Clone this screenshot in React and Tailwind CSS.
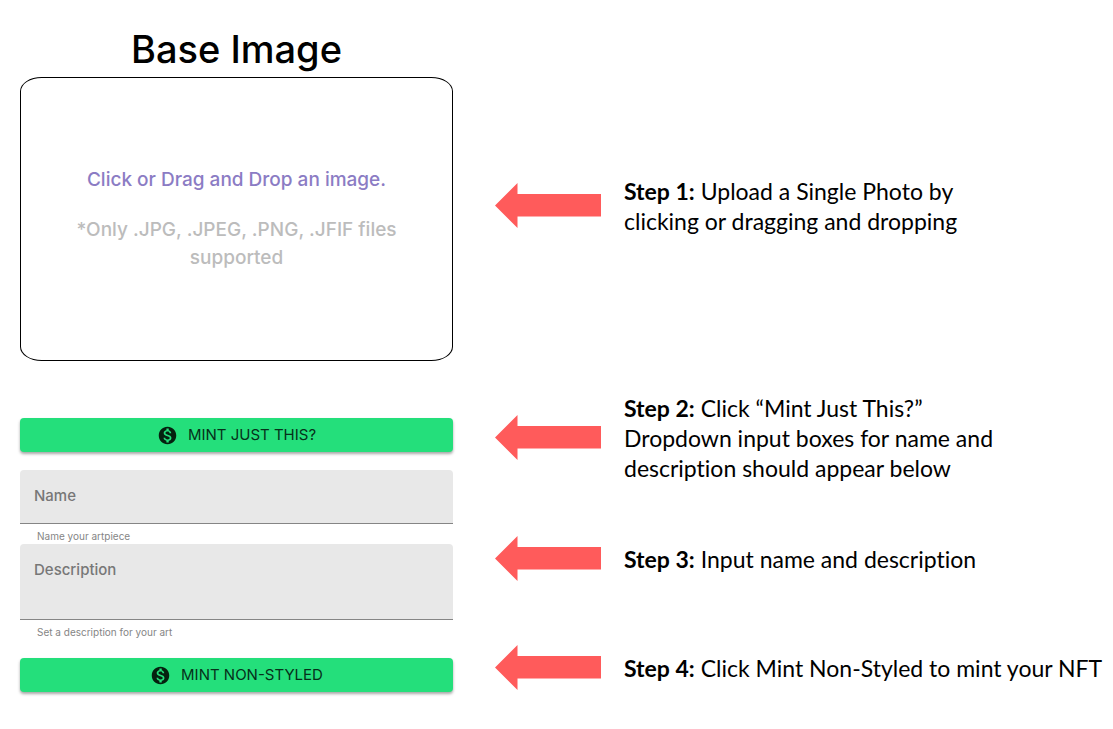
import { MdMonetizationOn } from "react-icons/md";

function Arrow() {
  return (
    <svg width="106" height="46" viewBox="0 0 106 46" className="shrink-0" aria-hidden="true">
      <path d="M0 22.500 22.500 0V11H106V33.500H22.500V45Z" fill="#ff5b5b" />
    </svg>
  );
}

function Step({ number, className, children }) {
  return (
    <li className={`flex items-center gap-[23px] ${className}`}>
      <Arrow />
      <p>
        <strong className="font-bold">Step {number}:</strong> {children}
      </p>
    </li>
  );
}

function MintButton({ children }) {
  return (
    <button
      type="button"
      className="flex h-[34px] w-full items-center justify-center gap-[10px] rounded-[4px] bg-[#24df7b] text-[15px] text-[#06301a] shadow-[0_2px_3px_rgba(0,0,0,0.35)]"
    >
      <MdMonetizationOn className="size-[21px] text-[#05210f]" />
      {children}
    </button>
  );
}

const fieldStyle =
  "block w-full resize-none rounded-t-[4px] border-b border-[#858585] bg-[#e8e8e8] px-[14px] pt-[22px] text-[15px] outline-none";

function Field({ id, label, helper, multiline }) {
  return (
    <div className="relative">
      {multiline ? (
        <textarea id={id} className={`${fieldStyle} h-[76px]`} />
      ) : (
        <input id={id} type="text" className={`${fieldStyle} h-[54px]`} />
      )}
      <label
        htmlFor={id}
        className="pointer-events-none absolute left-[14px] top-4 text-[15px] font-medium leading-5 text-[#777777]"
      >
        {label}
      </label>
      <p className="px-[17px] pt-1 text-[10px] leading-4 text-[#858585]">{helper}</p>
    </div>
  );
}

export default function App() {
  return (
    <main className="grid grid-cols-[minmax(0,433fr)_minmax(0,618fr)] gap-x-[42px] bg-white pb-9 pl-5 text-black">
      <form className="pt-[21px] font-['Inter',sans-serif]">
        <h1 className="text-center text-[38px] font-medium leading-[56px]">Base Image</h1>
        <label className="flex h-[284px] cursor-pointer flex-col items-center justify-center gap-[22px] rounded-[5%] border border-black px-12 text-center text-[19px] font-medium leading-7">
          <input type="file" accept=".jpg,.jpeg,.png,.jfif" className="sr-only" />
          <span className="text-[#8b7cc4]">Click or Drag and Drop an image.</span>
          <span className="text-[#bcbcbc]">*Only .JPG, .JPEG, .PNG, .JFIF files supported</span>
        </label>
        <div className="pt-[57px]">
          <MintButton>MINT JUST THIS?</MintButton>
        </div>
        <div className="pb-[18px] pt-[18px]">
          <Field id="name" label="Name" helper="Name your artpiece" />
          <Field id="description" label="Description" helper="Set a description for your art" multiline />
        </div>
        <MintButton>MINT NON-STYLED</MintButton>
      </form>

      <ol className="pt-[176px] font-['Lato',sans-serif] text-[23px] leading-[30px] [font-variant-ligatures:none]">
        <Step number={1} className="min-h-[60px]">
          Upload a Single Photo by
          <br />
          clicking or dragging and dropping
        </Step>
        <Step number={2} className="mt-[157px] min-h-[90px]">
          Click “Mint Just This?”
          <br />
          Dropdown input boxes for name and
          <br />
          description should appear below
        </Step>
        <Step number={3} className="mt-[53px]">
          Input name and description
        </Step>
        <Step number={4} className="mt-[63px]">
          Click Mint Non-Styled to mint your NFT
        </Step>
      </ol>
    </main>
  );
}
